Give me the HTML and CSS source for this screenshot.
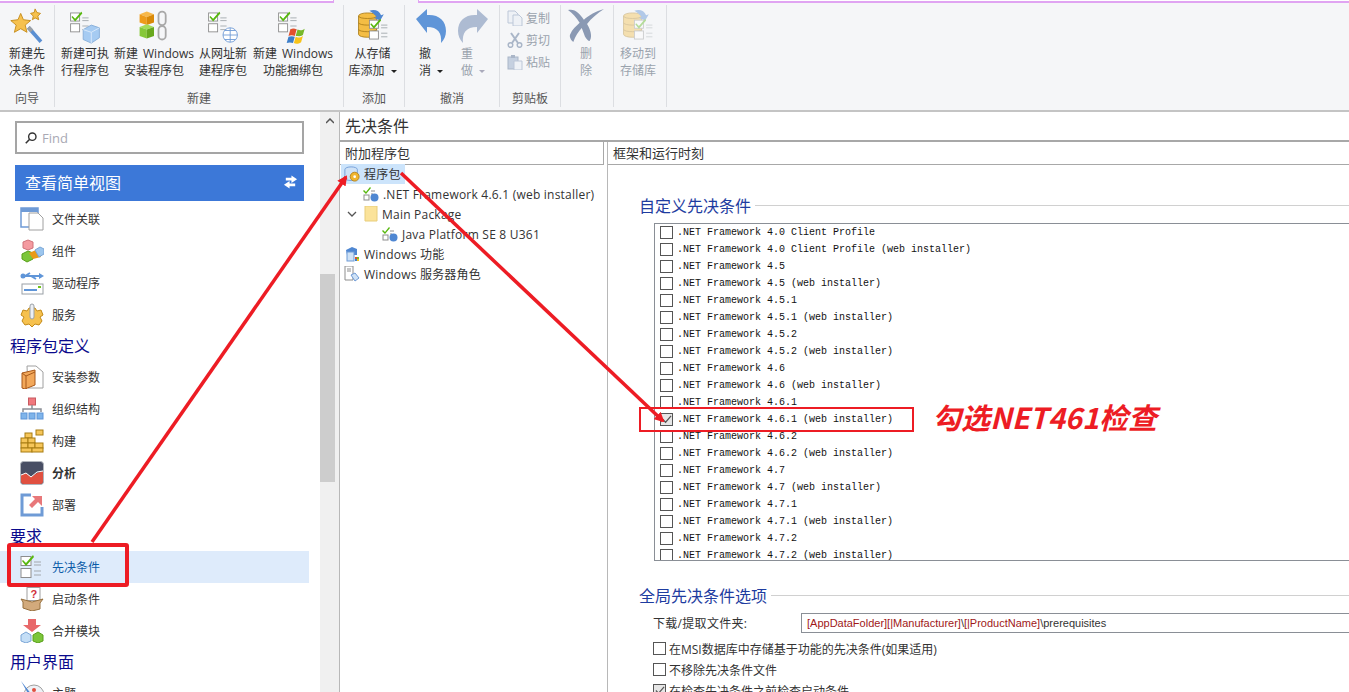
FILE: index.html
```html
<!DOCTYPE html>
<html>
<head>
<meta charset="utf-8"/>
<title>先决条件</title>
<link rel="stylesheet" href="styles.css">
</head>
<body>
<svg class="defs" width="0" height="0">
  <defs>
    <symbol id="checks" viewBox="0 0 24 24">
      <rect x="1" y="1.5" width="10" height="9" fill="#fff" stroke="#8d8d8d"/>
      <rect x="1" y="13.5" width="10" height="9" fill="#fff" stroke="#8d8d8d"/>
      <path d="M3 5l3 3 7-8 1 2-8 9-4-5z" fill="#58b80f"/>
      <path d="M14 7h7M14 10h7M14 16h7M14 20h7" stroke="#a3a8ad" fill="none"/>
    </symbol>
    <symbol id="dbcyl" viewBox="0 0 24 32">
      <path d="M1 5c0-5 22-5 22 0v22c0 5-22 5-22 0z" fill="#f4bd44" stroke="#a97c1a"/>
      <path d="M1 5c0 4 22 4 22 0M1 13c0 4 22 4 22 0M1 21c0 4 22 4 22 0" fill="none" stroke="#a97c1a"/>
    </symbol>
    <symbol id="pkgitem" viewBox="0 0 16 16">
      <path d="M1 4l2 2 4-5 1 1-5 6-3-3z" fill="#58b80f"/>
      <rect x="1" y="9" width="5" height="5" fill="#fff" stroke="#8d8d8d"/>
      <path d="M8 5h4M8 8h2" stroke="#8d8d8d"/>
      <circle cx="11.5" cy="11.5" r="4" fill="#4f87d2"/>
    </symbol>
  </defs>
</svg>

<header class="ribbon">
  <div class="pink pink-a"></div>
  <div class="pink pink-b"></div>

  <section class="group g-wizard">
    <div class="tools">
      <div class="tool">
        <svg class="big" viewBox="0 0 40 40"><path d="M13 6l3 7 8 1-6 5 2 8-7-4-7 4 2-8-6-5 8-1z" fill="#f6c14e" stroke="#c48a17"/><path d="M29 1l2 4 4 1-3 3 1 4-4-2-3 2 1-4-3-3 4-1z" fill="#f6c14e" stroke="#c48a17"/><path d="M20 23l3-3 14 16-3 3z" fill="#5a8fd2"/><path d="M20 23l3-3 4 4-3 3z" fill="#9aa0a6"/></svg>
        <span>新建先<br>决条件</span>
      </div>
    </div>
    <div class="group-name">向导</div>
  </section>

  <section class="group g-new">
    <div class="tools">
      <div class="tool w-a">
        <svg class="big" viewBox="0 0 40 40"><use href="#checks" x="3" y="4" width="24" height="24"/><path d="M18 24l9-5 9 3v11l-9 6-9-4z" fill="#a6cbf2" stroke="#86add8"/><path d="M18 24l9 3 9-5M27 27v12" fill="none" stroke="#dcebfa"/></svg>
        <span>新建可执<br>行程序包</span>
      </div>
      <div class="tool w-b">
        <svg class="big" viewBox="0 0 40 40"><path d="M4 7l8-3 8 3-8 3z" fill="#f7b84a"/><path d="M4 7l8 3v9l-8-3z" fill="#ee9b1a"/><path d="M12 10l8-3v9l-8 3z" fill="#d98908"/><path d="M4 21l8-3 8 3-8 3z" fill="#a4dc58"/><path d="M4 21l8 3v10l-8-3z" fill="#86c838"/><path d="M12 24l8-3v10l-8 3z" fill="#68a81e"/><rect x="25" y="4" width="8" height="15" rx="4" fill="none" stroke="#a8a8a8" stroke-width="2"/><rect x="25" y="20" width="8" height="15" rx="4" fill="none" stroke="#a8a8a8" stroke-width="2"/></svg>
        <span>新建 Windows<br>安装程序包</span>
      </div>
      <div class="tool w-c">
        <svg class="big" viewBox="0 0 40 40"><use href="#checks" x="3" y="4" width="24" height="24"/><circle cx="28" cy="30" r="8" fill="#fff" stroke="#6f9bd6"/><path d="M20 30h16M28 22v16M22 25h12M22 35h12" stroke="#6f9bd6" fill="none"/></svg>
        <span>从网址新<br>建程序包</span>
      </div>
      <div class="tool w-d">
        <svg class="big" viewBox="0 0 40 40"><use href="#checks" x="3" y="4" width="24" height="24"/><path d="M17 24c3-2 5-1 7 0l-2 7c-2-1-5-1-7 0z" fill="#e2502c"/><path d="M25 24c3 1 5 1 8-1l-2 7c-3 2-5 1-8 1z" fill="#77b82a"/><path d="M15 32c2-1 5-1 7 0l-2 7c-2-1-5-1-7 0z" fill="#3d7ec9"/><path d="M23 32c2 1 5 1 8-1l-2 7c-3 2-6 2-8 1z" fill="#f7c31a"/></svg>
        <span>新建 Windows<br>功能捆绑包</span>
      </div>
    </div>
    <div class="group-name">新建</div>
  </section>

  <section class="group g-add">
    <div class="tools">
      <div class="tool">
        <svg class="big" viewBox="0 0 40 40"><use href="#dbcyl" x="3" y="4" width="22" height="30"/><path d="M16 3c6-2 11 0 13 5l3-1-4 7-7-3 3-1c-2-3-5-5-8-7z" fill="#4f87d2"/><use href="#checks" x="15" y="12" width="24" height="24"/></svg>
        <span>从存储<br>库添加 <i class="caret"></i></span>
      </div>
    </div>
    <div class="group-name">添加</div>
  </section>

  <section class="group g-undo">
    <div class="tools">
      <div class="tool t-narrow t-menu">
        <svg class="big arrow" viewBox="0 0 32 36"><path d="M1 11l11-10v6c11-1 19 5 19 16 0 5-2 9-5 12 1-10-3-16-14-16v6z" fill="#5f95d8"/></svg>
        <span>撤<br>消 <i class="caret"></i></span>
      </div>
      <div class="tool t-narrow t-menu off">
        <svg class="big arrow" viewBox="0 0 32 36"><path d="M31 11l-11-10v6c-11-1-19 5-19 16 0 5 2 9 5 12-1-10 3-16 14-16v6z" fill="#adbbd2"/></svg>
        <span>重<br>做 <i class="caret"></i></span>
      </div>
    </div>
    <div class="group-name">撤消</div>
  </section>

  <section class="group g-clip">
    <div class="stack off">
      <div class="mini"><svg viewBox="0 0 16 16"><path d="M1 1h7l3 3v9H1z" fill="#eef1f6" stroke="#bcc7d8"/><path d="M6 5h6l3 3v8H6z" fill="#eef1f6" stroke="#bcc7d8"/></svg><span>复制</span></div>
      <div class="mini"><svg viewBox="0 0 16 16"><path d="M4 1l7 10M12 1L5 11" stroke="#aab6c8" stroke-width="2" fill="none"/><circle cx="3.5" cy="13" r="2.3" fill="none" stroke="#aab6c8" stroke-width="1.5"/><circle cx="12.5" cy="13" r="2.3" fill="none" stroke="#aab6c8" stroke-width="1.5"/></svg><span>剪切</span></div>
      <div class="mini"><svg viewBox="0 0 16 16"><rect x="1" y="3" width="10" height="12" fill="#c5d0e0" stroke="#aab6c8"/><rect x="4" y="1" width="4" height="3" fill="#aab6c8"/><path d="M7 7h8v9H7z" fill="#eef1f6" stroke="#bcc7d8"/></svg><span>粘贴</span></div>
    </div>
    <div class="group-name">剪贴板</div>
  </section>

  <section class="group g-del">
    <div class="tools">
      <div class="tool t-narrow off">
        <svg class="big" viewBox="0 0 34 34"><path d="M0 2c6-2 11 3 15 9 5-4 11-8 19-10-6 4-12 9-16 14 3 5 5 11 3 15-1 3-3 0-5-3l-3-8c-3 3-6 8-8 13-2-1-4-5-3-7 2-5 6-8 9-11C8 9 4 5 0 2z" fill="#8a99b3"/></svg>
        <span>删<br>除</span>
      </div>
    </div>
  </section>

  <section class="group g-move">
    <div class="tools">
      <div class="tool off">
        <svg class="big faded" viewBox="0 0 40 40"><use href="#dbcyl" x="3" y="4" width="22" height="30"/><path d="M16 3c6-2 11 0 13 5l3-1-4 7-7-3 3-1c-2-3-5-5-8-7z" fill="#4f87d2"/><use href="#checks" x="15" y="12" width="24" height="24"/></svg>
        <span>移动到<br>存储库</span>
      </div>
    </div>
  </section>
</header>

<main class="main">
  <aside class="sidebar">
    <div class="side-body">
      <div class="find">
        <svg viewBox="0 0 16 16"><circle cx="9.5" cy="6.5" r="4.2" fill="none" stroke="#333" stroke-width="1.6"/><path d="M6.5 9.5L2 14" stroke="#333" stroke-width="1.8"/></svg>
        <span>Find</span>
      </div>
      <div class="view-btn">
        <span>查看简单视图</span>
        <svg viewBox="0 0 16 14"><path d="M9 0l6 4-6 4V5.500H3v-3h6zM7 6v2.500h6v3H7V14L1 10z" fill="#fff"/></svg>
      </div>
      <ul class="nav nav-first">
        <li><svg viewBox="0 0 24 24"><path d="M1 1h17v19H1z" fill="#fff" stroke="#6f9bd6" stroke-width="1.500"/><path d="M1 1h17v4H1z" fill="#6f9bd6"/><path d="M9 6h9l5 5v12H9z" fill="#fff" stroke="#a0a0a0"/></svg>文件关联</li>
        <li><svg viewBox="0 0 24 24"><path d="M3 3l5-2 5 2v6l-5 2-5-2z" fill="#f49aa0" stroke="#d0727a"/><path d="M2 15l6-3 5 2v6l-6 3-5-3z" fill="#7cc63a" stroke="#58a01a"/><path d="M9 14l7-3 5 2v5l-8 2z" fill="#e89a18"/><path d="M15 11l5-3 4 2v5l-5 3z" fill="#9cc6ee" stroke="#7aa6d6"/></svg>组件</li>
        <li><svg viewBox="0 0 24 24"><path d="M1 5h20M5 5l5-3M11 5l5 3" stroke="#5f95d8" stroke-width="2" fill="none"/><circle cx="3" cy="5" r="2.500" fill="#5f95d8"/><path d="M19 2l5 3-5 3z" fill="#5f95d8"/><rect x="2" y="13" width="21" height="10" fill="#fff" stroke="#9aa0a6"/><path d="M4 19h13" stroke="#5f95d8" stroke-width="2"/><rect x="18" y="15" width="3" height="2" fill="#6fc21c"/></svg>驱动程序</li>
        <li><svg viewBox="0 0 24 24"><path d="M9 5h6l2 3 4-1 2 5-3 2 2 4-3 4-4-1-3 3-3-3-4 1-3-4 2-4-3-2 2-5 4 1z" fill="#f6c14e" stroke="#c48a17"/><rect x="10" y="1" width="4" height="15" rx="2" fill="#eceff3" stroke="#9aa0a6"/></svg>服务</li>
      </ul>
      <h3 class="nav-head">程序包定义</h3>
      <ul class="nav">
        <li><svg viewBox="0 0 24 24"><path d="M7 1h9l7 6v16H8z" fill="#fff" stroke="#a0a0a0"/><path d="M2 8l13-3 0 15-10 4-3-1z" fill="#f2a85a" stroke="#a8581a"/><path d="M2 8l4 3v13M6 11l9-4" stroke="#a8581a" fill="none"/></svg>安装参数</li>
        <li><svg viewBox="0 0 24 24"><rect x="8.500" y="1" width="7" height="7" fill="#f0787e" stroke="#c85a60"/><path d="M12 8v4M3 15v-3h18v3" stroke="#8a8f96" stroke-width="1.500" fill="none"/><rect x="1" y="16" width="6" height="6" fill="#7fb4ea" stroke="#5f95d8"/><rect x="9" y="16" width="6" height="6" fill="#7fb4ea" stroke="#5f95d8"/><rect x="17" y="16" width="6" height="6" fill="#7fb4ea" stroke="#5f95d8"/></svg>组织结构</li>
        <li><svg viewBox="0 0 24 24" fill="#f6c65a" stroke="#a87c12"><rect x="16" y="1" width="7" height="5"/><rect x="5" y="4" width="7" height="5"/><rect x="1" y="9" width="7" height="5"/><rect x="8" y="9" width="7" height="5"/><rect x="1" y="14" width="7" height="5"/><rect x="8" y="14" width="7" height="5"/><rect x="15" y="14" width="8" height="5"/><rect x="1" y="19" width="11" height="4"/><rect x="12" y="19" width="11" height="4"/></svg>构建</li>
        <li class="bold"><svg viewBox="0 0 24 24"><rect x="0.500" y="0.500" width="23" height="23" rx="3" fill="#484e64" stroke="#b0b4bc"/><path d="M1 14l5-2 5 4 6-4 6-2v10a3 3 0 0 1-3 3H4a3 3 0 0 1-3-3z" fill="#e05040"/><path d="M1 14l5-2 5 4 6-5 6-1" fill="none" stroke="#fff"/></svg>分析</li>
        <li><svg viewBox="0 0 24 24"><path d="M11 2H2v20h20v-8" fill="none" stroke="#6f9bd6" stroke-width="3"/><path d="M9 15l9-9M12 3h10v10l-4-4-6 6-3-3 6-6z" fill="#e8787a"/></svg>部署</li>
      </ul>
      <h3 class="nav-head">要求</h3>
      <ul class="nav">
        <li class="current"><svg viewBox="0 0 24 24"><use href="#checks" width="24" height="24"/></svg>先决条件</li>
        <li><svg viewBox="0 0 24 24"><rect x="7" y="0.500" width="13" height="13" fill="#fff" stroke="#a0a0a0"/><text x="10.500" y="11" class="qmark">?</text><path d="M1 12l11 3 11-3-3 4v6l-8 2-9-3v-6z" fill="#d2aa7c" stroke="#96703e"/></svg>启动条件</li>
        <li><svg viewBox="0 0 24 24"><path d="M8 0h8v6h5l-9 7-9-7h5z" fill="#e8686a"/><path d="M1 16l5-3 5 3v6l-5 2-5-2z" fill="#c4def6" stroke="#7aa6d6"/><path d="M13 16l5-3 5 3v6l-5 2-5-2z" fill="#7cc63a" stroke="#58a01a"/></svg>合并模块</li>
      </ul>
      <h3 class="nav-head">用户界面</h3>
      <ul class="nav">
        <li><svg viewBox="0 0 24 24"><circle cx="14" cy="14" r="10" fill="#eef1f6" stroke="#a0a0a0"/><path d="M1 0l11 14-2 2z" fill="#4f87d2"/><circle cx="14" cy="9" r="2" fill="#e05040"/><circle cx="20" cy="13" r="2" fill="#6fc21c"/></svg>主题</li>
      </ul>
    </div>
    <div class="scroll">
      <div class="scroll-up"><svg viewBox="0 0 8 6"><path d="M0 5l4-4 4 4" fill="none" stroke="#555" stroke-width="1.500"/></svg></div>
      <div class="scroll-thumb"></div>
    </div>
  </aside>

  <section class="content">
    <h1 class="page-title">先决条件</h1>
    <div class="panes">
      <div class="left-pane">
        <div class="pane-head">附加程序包</div>
        <ul class="tree">
          <li class="lvl0 selected"><svg viewBox="0 0 18 18"><path d="M1 4c0-4 14-4 14 0v10c0 3-14 3-14 0z" fill="#cfe2f6" stroke="#6f9bd6"/><circle cx="12" cy="12" r="5" fill="#f0b52e" stroke="#b4821a"/><circle cx="12" cy="12" r="1.500" fill="#fff"/></svg>程序包</li>
          <li class="lvl1"><svg viewBox="0 0 16 16"><use href="#pkgitem" width="16" height="16"/></svg>.NET Framework 4.6.1 (web installer)</li>
          <li class="lvl1 has-toggle"><svg class="toggle" viewBox="0 0 10 6"><path d="M1 1l4 4 4-4" fill="none" stroke="#555" stroke-width="1.300"/></svg><svg viewBox="0 0 14 16"><path d="M1 0h12v15H1z" fill="#fbe39a" stroke="#e8cd7a"/></svg>Main Package</li>
          <li class="lvl2"><svg viewBox="0 0 16 16"><use href="#pkgitem" width="16" height="16"/></svg>Java Platform SE 8 U361</li>
          <li class="lvl0"><svg viewBox="0 0 16 16"><path d="M2 4l6-3 5 2v6H3z" fill="#4f87d2"/><rect x="3" y="6" width="7" height="9" fill="#cfe2f6" stroke="#6f9bd6"/><rect x="11" y="11" width="2" height="2" fill="#e2502c"/><rect x="13" y="11" width="2" height="2" fill="#77b82a"/><rect x="11" y="13" width="2" height="2" fill="#3d7ec9"/><rect x="13" y="13" width="2" height="2" fill="#f7c31a"/></svg>Windows 功能</li>
          <li class="lvl0"><svg viewBox="0 0 16 16"><path d="M1 0h8v14H1z" fill="#fff" stroke="#8d8d8d"/><path d="M3 3h4M3 5h4" stroke="#8d8d8d"/><path d="M7 9l4-2 4 5-4 3z" fill="#cfe2f6" stroke="#6f9bd6"/></svg>Windows 服务器角色</li>
        </ul>
      </div>
      <div class="right-pane">
        <div class="pane-head">框架和运行时刻</div>
        <div class="right-body">
          <div class="fieldset-head"><span>自定义先决条件</span></div>
          <ul class="checklist">
            <li><i class="cb"></i>.NET Framework 4.0 Client Profile</li>
            <li><i class="cb"></i>.NET Framework 4.0 Client Profile (web installer)</li>
            <li><i class="cb"></i>.NET Framework 4.5</li>
            <li><i class="cb"></i>.NET Framework 4.5 (web installer)</li>
            <li><i class="cb"></i>.NET Framework 4.5.1</li>
            <li><i class="cb"></i>.NET Framework 4.5.1 (web installer)</li>
            <li><i class="cb"></i>.NET Framework 4.5.2</li>
            <li><i class="cb"></i>.NET Framework 4.5.2 (web installer)</li>
            <li><i class="cb"></i>.NET Framework 4.6</li>
            <li><i class="cb"></i>.NET Framework 4.6 (web installer)</li>
            <li><i class="cb"></i>.NET Framework 4.6.1</li>
            <li><i class="cb on"><svg viewBox="0 0 12 12"><path d="M2 6l3 3 6-7" fill="none" stroke="#555" stroke-width="1.300"/></svg></i>.NET Framework 4.6.1 (web installer)</li>
            <li><i class="cb"></i>.NET Framework 4.6.2</li>
            <li><i class="cb"></i>.NET Framework 4.6.2 (web installer)</li>
            <li><i class="cb"></i>.NET Framework 4.7</li>
            <li><i class="cb"></i>.NET Framework 4.7 (web installer)</li>
            <li><i class="cb"></i>.NET Framework 4.7.1</li>
            <li><i class="cb"></i>.NET Framework 4.7.1 (web installer)</li>
            <li><i class="cb"></i>.NET Framework 4.7.2</li>
            <li><i class="cb"></i>.NET Framework 4.7.2 (web installer)</li>
          </ul>
          <div class="fieldset-head second"><span>全局先决条件选项</span></div>
          <div class="folder-row">
            <label>下载/提取文件夹:</label>
            <div class="folder-input"><b>[AppDataFolder]</b><b>[|Manufacturer]</b>\<b>[|ProductName]</b>\prerequisites</div>
          </div>
          <div class="opt"><i class="cb"></i>在MSI数据库中存储基于功能的先决条件(如果适用)</div>
          <div class="opt"><i class="cb"></i>不移除先决条件文件</div>
          <div class="opt"><i class="cb on"><svg viewBox="0 0 12 12"><path d="M2 6l3 3 6-7" fill="none" stroke="#555" stroke-width="1.300"/></svg></i>在检查先决条件之前检查启动条件</div>
        </div>
      </div>
    </div>
  </section>
</main>

<!-- red annotations drawn over the window -->
<svg class="marks" viewBox="0 0 1349 692">
  <defs>
    <marker id="head" markerWidth="10" markerHeight="10" refX="8" refY="5" orient="auto" markerUnits="userSpaceOnUse"><path d="M0 0l10 5-10 5z" fill="#ed1c24"/></marker>
  </defs>
  <rect x="9" y="545" width="118" height="40" rx="1" fill="none" stroke="#ed1c24" stroke-width="4"/>
  <path d="M92 542L346 177" stroke="#ed1c24" stroke-width="3.500" marker-end="url(#head)"/>
  <path d="M401 173L663 421" stroke="#ed1c24" stroke-width="3.500" marker-end="url(#head)"/>
  <rect x="640" y="408" width="273" height="23" fill="none" stroke="#ed1c24" stroke-width="2"/>
</svg>
<div class="note">勾选NET461检查</div>
</body>
</html>
```

FILE: styles.css
```css
* {
  box-sizing: border-box;
}

html, body {
  margin: 0;
  padding: 0;
  height: 692px;
  overflow: hidden;
  background: #fff;
}

body {
  position: relative;
  font-family: "Open Sans", "Noto Sans CJK SC", sans-serif;
  font-size: 12px;
  color: #333;
}

ul {
  list-style: none;
  margin: 0;
  padding: 0;
}

.defs {
  position: absolute;
}

/* ribbon */
.ribbon {
  position: relative;
  display: flex;
  height: 112px;
  padding-top: 5px;
  background: #f5f6f8;
  border-bottom: 2px solid #c4c4c4;
}

.pink {
  position: absolute;
  top: 0;
  height: 3px;
  border-bottom: 2px solid #e0a4f2;
  background: #fff;
}

.pink-a {
  left: 0;
  width: 334px;
  border-right: 1px solid #e0a4f2;
}

.pink-b {
  left: 418px;
  right: 0;
  border-left: 1px solid #e0a4f2;
}

.group {
  display: flex;
  flex-direction: column;
  height: 102px;
  border-right: 1px solid #dcdee2;
}

.g-wizard { width: 55px; }
.g-new { width: 289px; }
.g-add { width: 61px; }
.g-undo { width: 95px; }
.g-clip { width: 61px; }
.g-del { width: 53px; }
.g-move { width: 53px; }

.tools {
  flex: 1;
  display: flex;
  justify-content: center;
  padding-top: 3px;
}

.g-new .tools {
  justify-content: flex-start;
  padding-left: 4px;
}

.g-add .tools { padding-right: 3px; }
.g-del .tools { padding-right: 2px; }
.g-move .tools { padding-right: 4px; }

.tool {
  display: flex;
  flex-direction: column;
  align-items: center;
  text-align: center;
  line-height: 17px;
  white-space: nowrap;
  word-spacing: 2px;
}

.tool span {
  display: block;
  margin-top: 1px;
}

.big {
  display: block;
  width: 36px;
  height: 36px;
}

.arrow {
  width: 32px;
  height: 36px;
}

.faded {
  opacity: .4;
}

.w-a { width: 52px; }
.w-b { width: 86px; }
.w-c { width: 52px; }
.w-d { width: 88px; }

.t-narrow {
  width: 42px;
}

.t-menu span {
  width: 24px;
  text-align: left;
}

.off {
  color: #9aa3ad;
}

.group-name {
  height: 23px;
  padding-top: 6px;
  line-height: 17px;
  text-align: center;
  color: #555;
}

.caret {
  display: inline-block;
  margin-left: 1px;
  vertical-align: 2px;
  border-left: 3px solid transparent;
  border-right: 3px solid transparent;
  border-top: 3px solid #222;
}

.off .caret {
  border-top-color: #aab;
}

.stack {
  flex: 1;
  padding: 2px 0 0 7px;
}

.mini {
  display: flex;
  align-items: center;
  gap: 3px;
  height: 22px;
}

.mini svg {
  width: 16px;
  height: 16px;
}

/* main area */
.main {
  display: flex;
  height: 580px;
}

.sidebar {
  display: flex;
  width: 340px;
  flex: none;
  border-right: 1px solid #b8b8b8;
}

.side-body {
  width: 320px;
  padding-top: 9px;
}

.find {
  display: flex;
  align-items: center;
  gap: 4px;
  width: 289px;
  height: 33px;
  margin-left: 15px;
  padding-left: 7px;
  border: 2px solid #a5a5a5;
  font-size: 13px;
  color: #a9a9b4;
}

.find svg {
  width: 14px;
  height: 14px;
}

.view-btn {
  display: flex;
  align-items: center;
  justify-content: space-between;
  width: 289px;
  height: 36px;
  margin: 11px 0 0 15px;
  padding: 0 6px 3px 10px;
  background: #3c78d8;
  color: #fff;
  font-size: 16px;
}

.view-btn svg {
  width: 15px;
  height: 14px;
}

.nav-first {
  margin-top: 2px;
}

.nav li {
  display: flex;
  align-items: center;
  gap: 8px;
  width: 309px;
  height: 32px;
  padding-left: 20px;
}

.nav li svg {
  width: 24px;
  height: 24px;
  flex: none;
}

.nav li.bold {
  font-weight: 700;
}

.nav li.current {
  background: #deebfb;
  color: #0a5ba8;
}

.qmark {
  font-family: "Liberation Sans", sans-serif;
  font-size: 11px;
  font-weight: 700;
  fill: #d0303a;
}

.nav-head {
  margin: 0;
  height: 30px;
  padding-left: 10px;
  line-height: 30px;
  font-size: 16px;
  font-weight: 400;
  color: #0a0a8c;
}

.scroll {
  width: 19px;
  background: #f0f0f0;
}

.scroll-up {
  display: flex;
  justify-content: center;
  height: 162px;
  padding-top: 6px;
}

.scroll-up svg {
  width: 8px;
  height: 6px;
}

.scroll-thumb {
  width: 15px;
  height: 208px;
  background: #cdcdcd;
}

/* right side */
.content {
  flex: 1;
  min-width: 0;
}

.page-title {
  margin: 0;
  height: 30px;
  padding-left: 5px;
  line-height: 28px;
  font-size: 16px;
  font-weight: 400;
  color: #333;
  border-bottom: 2px solid #a8a8a8;
}

.panes {
  display: flex;
  gap: 3px;
}

.left-pane {
  width: 264px;
  flex: none;
}

.right-pane {
  flex: 1;
  border-left: 1px solid #b8b8b8;
}

.pane-head {
  height: 23px;
  padding-left: 5px;
  line-height: 22px;
  font-size: 13px;
  background: #fff;
  border-bottom: 1px solid #a8a8a8;
  border-right: 1px solid #a8a8a8;
}

.right-pane .pane-head {
  border-right: 0;
}

.tree {
  margin-top: -1px;
}

.tree li {
  display: flex;
  align-items: center;
  gap: 4px;
  height: 20px;
  white-space: nowrap;
  letter-spacing: .22px;
}

.tree li svg {
  width: 16px;
  height: 16px;
  flex: none;
}

.tree .lvl0 { padding-left: 4px; }
.tree .lvl1 { padding-left: 23px; }
.tree .lvl2 { padding-left: 42px; }

.tree .has-toggle {
  padding-left: 7px;
  gap: 4px;
}

.tree .has-toggle svg {
  width: 14px;
}

.tree .has-toggle .toggle {
  width: 10px;
  margin-right: 3px;
}

.tree .selected {
  width: 64px;
  margin-left: 1px;
  padding-left: 3px;
  background: #cce4fb;
}

.right-body {
  padding-left: 31px;
}

.fieldset-head {
  display: flex;
  align-items: center;
  gap: 4px;
  height: 18px;
  margin-top: 31px;
  font-size: 16px;
  color: #1e3ca0;
}

.fieldset-head::after {
  content: "";
  flex: 1;
  height: 1px;
  background: #d0d0d0;
}

.fieldset-head.second {
  margin-top: 25px;
}

.checklist {
  height: 338px;
  margin: 9px 0 0 15px;
  padding-left: 5px;
  overflow: hidden;
  border: 1px solid #8a8f96;
  border-right: 0;
}

.checklist li {
  display: flex;
  align-items: center;
  height: 17px;
  font-family: "Liberation Mono", monospace;
  font-size: 10px;
  color: #111;
  white-space: pre;
}

.cb {
  display: flex;
  align-items: center;
  justify-content: center;
  width: 13px;
  height: 13px;
  flex: none;
  background: #fff;
  border: 1px solid #555;
}

.checklist .cb {
  margin-right: 4px;
}

.cb svg {
  width: 11px;
  height: 11px;
}

.cb.on {
  background: #e6e6e6;
}

.folder-row {
  display: flex;
  align-items: center;
  height: 22px;
  margin: 8px 0 4px 14px;
}

.folder-row label {
  width: 148px;
  flex: none;
  letter-spacing: .3px;
}

.folder-input {
  flex: 1;
  height: 20px;
  padding-left: 5px;
  line-height: 18px;
  font-family: "Liberation Sans", sans-serif;
  font-size: 11px;
  color: #333;
  border: 1px solid #8a8f96;
  border-right: 0;
}

.folder-input b {
  font-weight: 400;
  color: #a01818;
}

.opt {
  display: flex;
  align-items: center;
  gap: 3px;
  height: 21px;
  margin-left: 14px;
}

/* annotations */
.marks {
  position: absolute;
  left: 0;
  top: 0;
  width: 1349px;
  height: 692px;
  pointer-events: none;
}

.note {
  position: absolute;
  left: 932px;
  top: 396px;
  font-family: "Noto Sans CJK SC", sans-serif;
  font-size: 29px;
  font-weight: 700;
  font-style: italic;
  line-height: 40px;
  white-space: nowrap;
  color: #ed1c24;
}
```
